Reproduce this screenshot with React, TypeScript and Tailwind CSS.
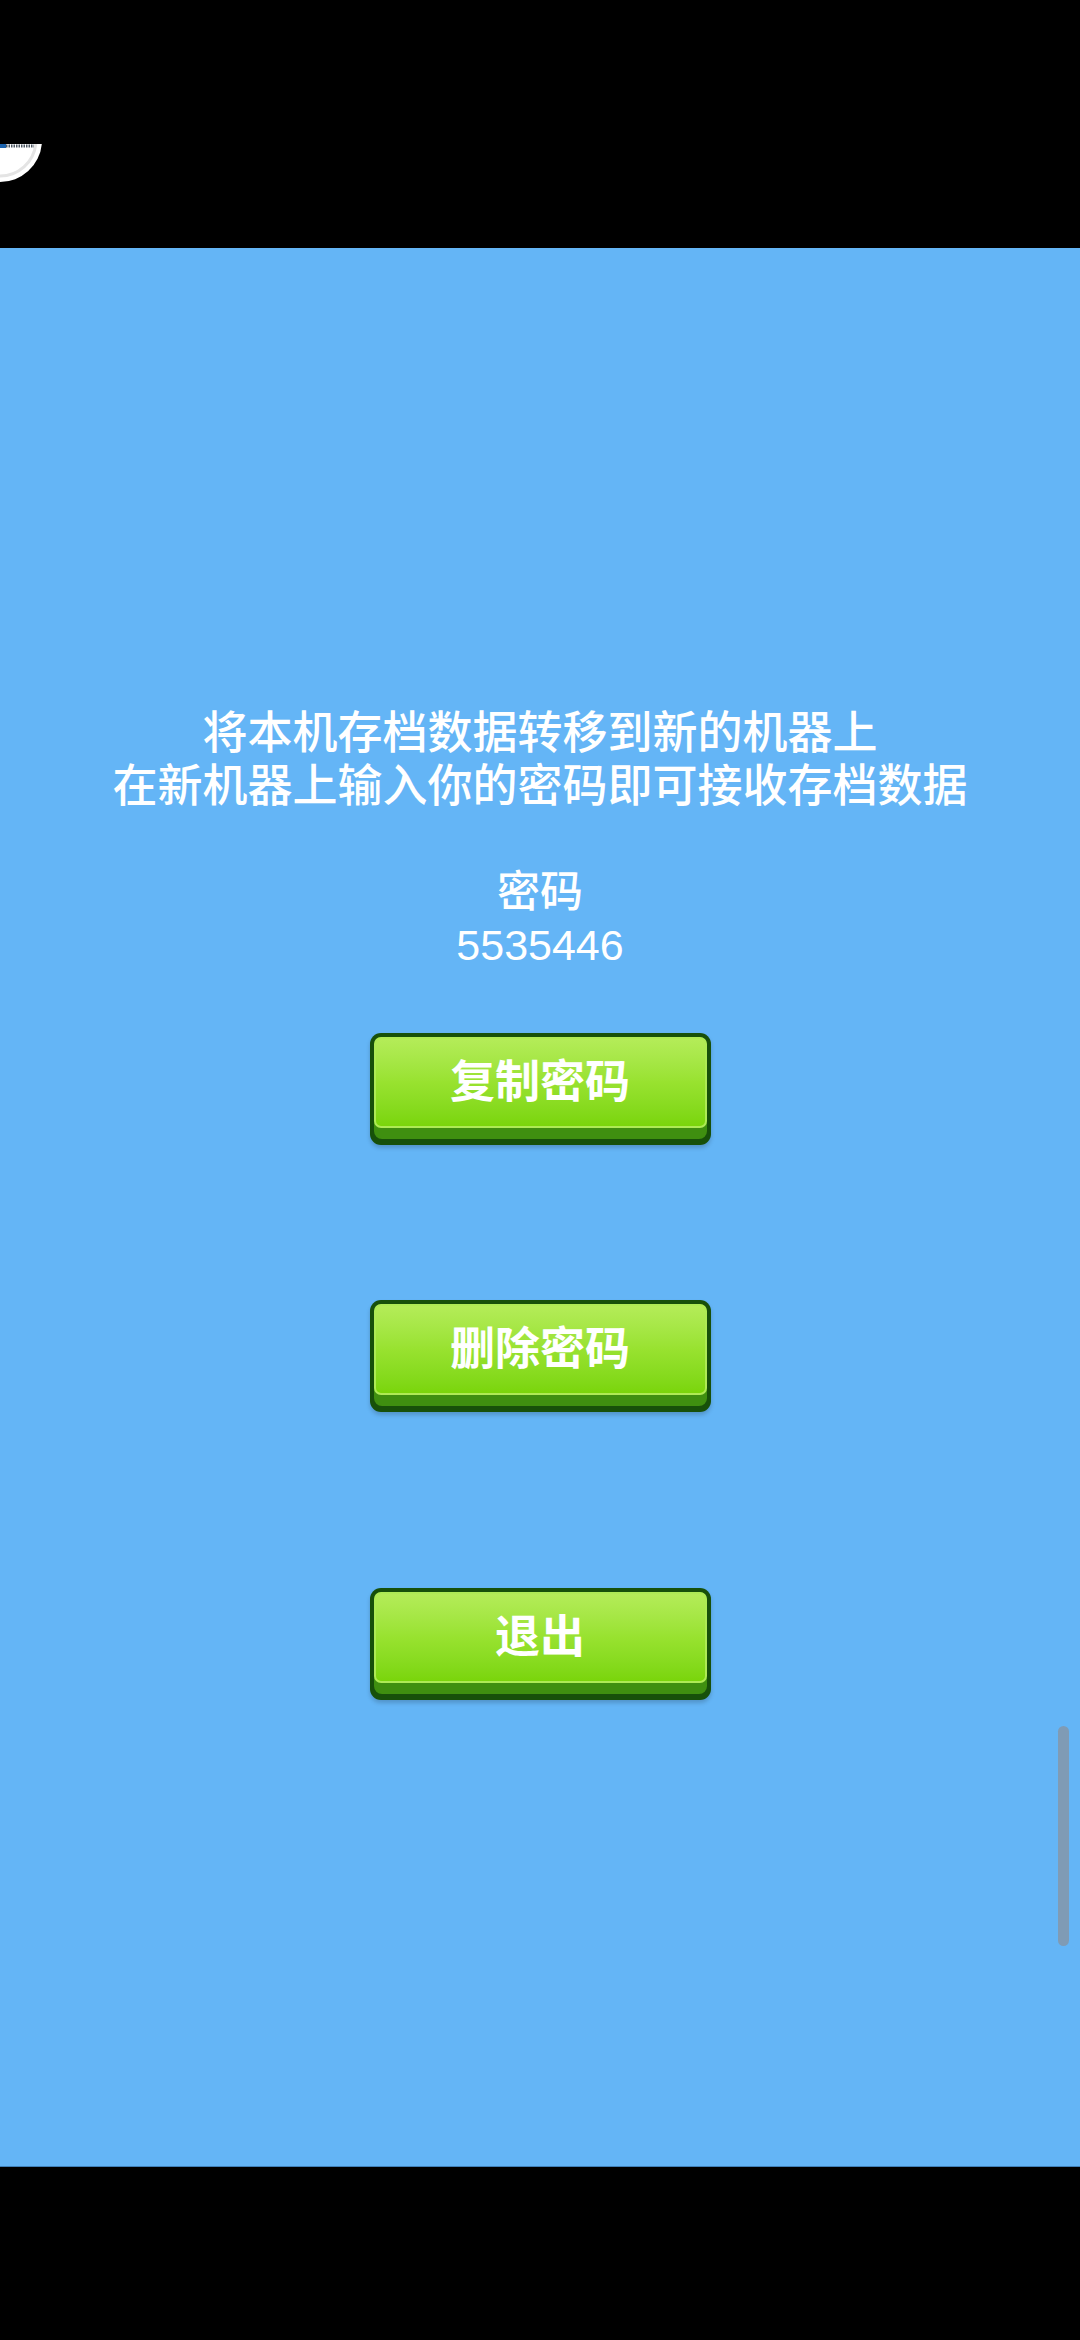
const buttons = [
  { label: '复制密码', mt: 'mt-[61px]' },
  { label: '删除密码', mt: 'mt-[155px]' },
  { label: '退出', mt: 'mt-[176px]' },
];

function GreenButton({ label, className }: { label: string; className: string }) {
  return (
    <button
      className={`mx-auto block h-[112px] w-[341px] rounded-[11px] bg-[#17500a] p-[4px] pb-[6px] shadow-[0_3px_4px_rgba(0,0,0,0.18)] ${className}`}
    >
      <div className="flex h-full flex-col rounded-[8px] bg-[#3f8f10] pb-[11px]">
        <div className="flex flex-1 items-center justify-center rounded-[7px] border-2 border-[#aeea55] bg-gradient-to-b from-[#b4ec58] via-[#98e22f] to-[#7ad50a] text-[45px] font-bold text-white">
          {label}
        </div>
      </div>
    </button>
  );
}

function CornerBadge() {
  return (
    <svg width="48" height="42" viewBox="0 0 48 42" className="block">
      <path d="M0 0 L41.8 0 A42 42 0 0 1 0 38 Z" fill="#ffffff" />
      <path d="M35.8 0 A36 36 0 0 1 0 32" fill="none" stroke="#e4e4e4" strokeWidth="3" />
      <rect x="0" y="0" width="6" height="4" fill="#1b62ad" />
      <line x1="6" y1="2" x2="34" y2="2" stroke="#4a5560" strokeWidth="3" strokeDasharray="1.5 1" />
    </svg>
  );
}

export default function App() {
  return (
    <div
      className="flex h-[2340px] w-[1080px] flex-col bg-black"
      style={{ fontFamily: '"Liberation Sans", "Noto Sans CJK SC", sans-serif' }}
    >
      <div className="h-[248px] shrink-0 bg-black pt-[144px]">
        <CornerBadge />
      </div>

      <div className="relative h-[1919px] shrink-0 border-b border-[#3f7fb8] bg-[#64b5f6] pt-[459px]">
        <div className="text-center text-[45px] font-medium leading-[53px] text-white">
          <p>将本机存档数据转移到新的机器上</p>
          <p>在新机器上输入你的密码即可接收存档数据</p>
          <p>&nbsp;</p>
          <p className="text-[43px]">密码</p>
          <p className="text-[43px]">5535446</p>
        </div>

        {buttons.map((b) => (
          <GreenButton key={b.label} label={b.label} className={b.mt} />
        ))}

        <div className="absolute right-[11px] top-[1478px] h-[220px] w-[11px] rounded-full bg-[#7f9bb5]" />
      </div>

      <div className="flex-1 bg-black" />
    </div>
  );
}
